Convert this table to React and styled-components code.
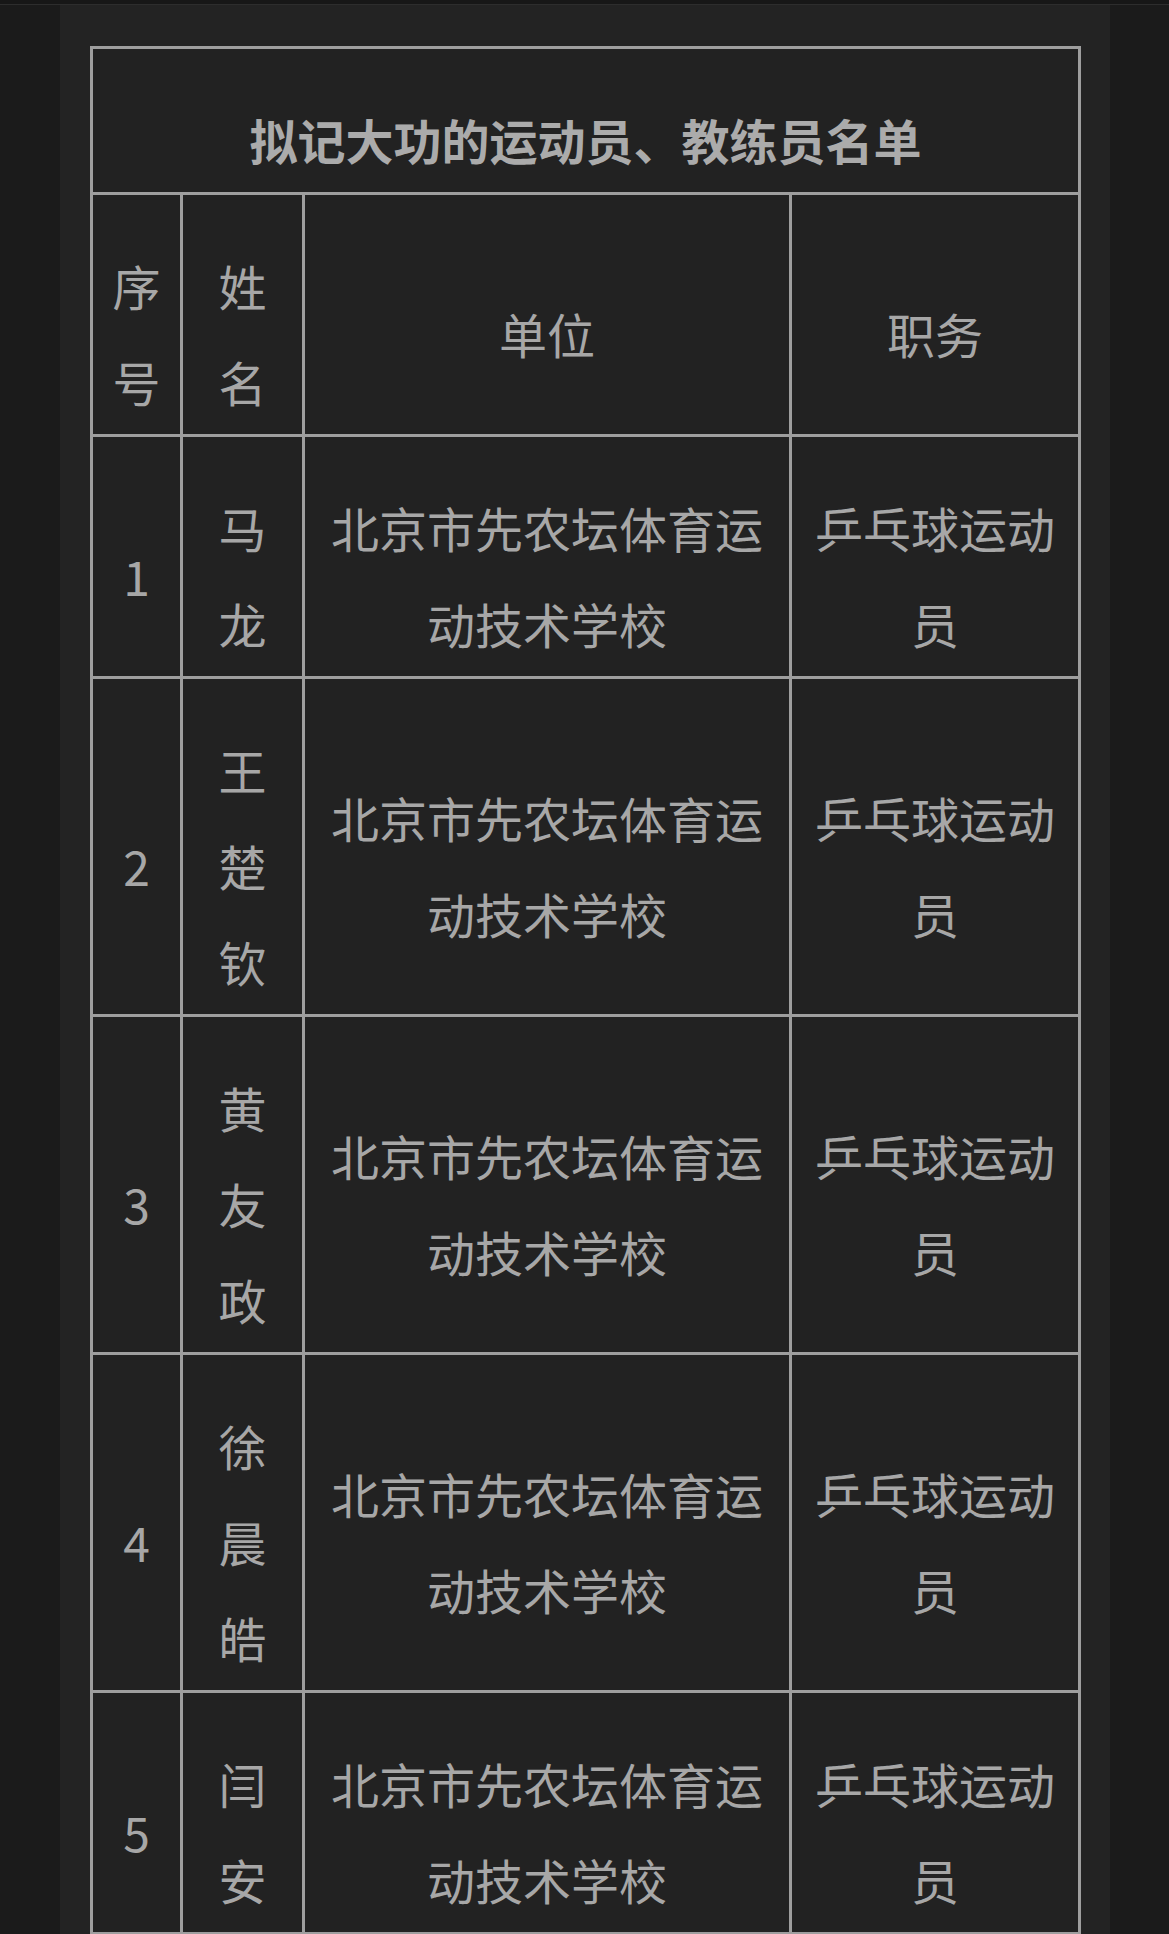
import React from 'react'
import styled, { createGlobalStyle } from 'styled-components'

const GlobalStyle = createGlobalStyle`
  html, body {
    margin: 0;
    padding: 0;
    background: #1b1b1b;
  }
  body {
    font-family: "Noto Sans CJK SC", "Noto Sans", sans-serif;
  }
`

const TopBar = styled.div`
  height: 4px;
  background: #171717;
  border-bottom: 1px solid #2d2d2d;
`

const Panel = styled.main`
  margin-left: 60px;
  width: 1050px;
  min-height: 1929px;
  box-sizing: border-box;
  padding: 41px 0 0 30px;
  background: #232323;
`

const Table = styled.table`
  width: 991px;
  table-layout: fixed;
  border-collapse: collapse;
  background: #222222;
  color: #a7a7a7;
  font-size: 48px;
  line-height: 96px;
`

const Cell = styled.td`
  border: 3px solid #9e9e9e;
  padding: 42px 16px 5px;
  text-align: center;
  vertical-align: middle;
  font-weight: ${p => (p.$title ? 700 : 400)};
  color: ${p => (p.$title ? '#ababab' : '#a7a7a7')};
`

const rows = [
  { no: '1', name: '马龙' },
  { no: '2', name: '王楚钦' },
  { no: '3', name: '黄友政' },
  { no: '4', name: '徐晨皓' },
  { no: '5', name: '闫安' },
]

export default function App() {
  return (
    <>
      <GlobalStyle />
      <TopBar />
      <Panel>
        <Table>
          <colgroup>
            <col style={{ width: 90 }} />
            <col style={{ width: 122 }} />
            <col style={{ width: 487 }} />
            <col style={{ width: 289 }} />
          </colgroup>
          <tbody>
            <tr>
              <Cell colSpan={4} $title>拟记大功的运动员、教练员名单</Cell>
            </tr>
            <tr>
              <Cell>序号</Cell>
              <Cell>姓名</Cell>
              <Cell>单位</Cell>
              <Cell>职务</Cell>
            </tr>
            {rows.map(r => (
              <tr key={r.no}>
                <Cell>{r.no}</Cell>
                <Cell>{r.name}</Cell>
                <Cell>北京市先农坛体育运动技术学校</Cell>
                <Cell>乒乓球运动员</Cell>
              </tr>
            ))}
          </tbody>
        </Table>
      </Panel>
    </>
  )
}
